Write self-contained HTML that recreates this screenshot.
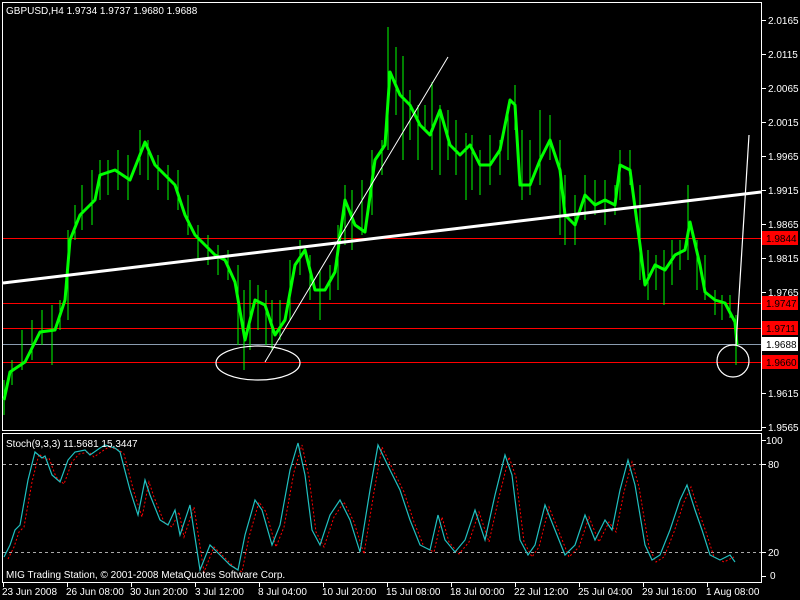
<!DOCTYPE html>
<html><head><meta charset="utf-8"><style>
html,body{margin:0;padding:0;background:#000;width:800px;height:600px;overflow:hidden}
svg{display:block}
text{font-family:"Liberation Sans",sans-serif;font-size:10px;fill:#fff}
</style></head><body>
<svg width="800" height="600" xmlns="http://www.w3.org/2000/svg">
<rect width="800" height="600" fill="#000"/>
<rect x="2.5" y="2.5" width="759" height="428" fill="none" stroke="#fff"/>
<rect x="2.5" y="433.5" width="759" height="149" fill="none" stroke="#fff"/>
<line x1="3" y1="238.5" x2="761" y2="238.5" stroke="#f00"/>
<line x1="3" y1="303.5" x2="761" y2="303.5" stroke="#f00"/>
<line x1="3" y1="328.5" x2="761" y2="328.5" stroke="#f00"/>
<line x1="3" y1="344.5" x2="761" y2="344.5" stroke="#8a9cb0"/>
<line x1="3" y1="362.5" x2="761" y2="362.5" stroke="#f00"/>
<g stroke="#0f0" stroke-width="1">
<path d="M4 380V415M12 360V385M22 330V370M32 320V360M42 310V345M52 305V365M60 300V330M68 230V320M75 205V240M82 185V230M92 170V225M100 160V200M108 160V195M118 150V190M128 155V200M140 130V175M148 140V180M158 155V190M168 165V200M178 170V210M188 195V235M198 225V260M208 235V265M218 245V275M228 250V280M238 265V345M244 290V370M250 280V350M258 285V330M266 290V345M272 300V350M280 300V340M290 260V320M300 240V275M310 255V300M320 270V320M330 265V300M338 225V290M345 185V245M352 190V250M362 180V235M372 150V215M382 140V175M388 27V150M396 47V115M403 56V160M410 90V140M418 105V160M425 105V130M432 82V170M440 105V175M448 110V160M456 120V175M466 133V200M472 135V190M480 150V195M490 135V185M500 140V175M508 110V160M515 85V130M522 130V200M530 140V195M540 110V185M550 115V160M560 140V235M565 175V245M575 195V245M585 175V220M595 180V215M605 180V225M615 185V215M620 150V200M630 150V185M640 185V280M648 250V300M656 255V290M664 250V305M672 240V285M680 240V270M688 185V260M697 240V290M705 255V300M715 290V315M722 295V320M730 295V318M736 315V365"/>
</g>
<polyline fill="none" stroke="#0f0" stroke-width="3" stroke-linejoin="round" points="4,400 10,372 25,362 40,332 55,330 65,300 70,240 80,215 95,200 100,175 115,170 130,180 145,142 155,165 165,175 175,185 185,215 195,235 205,245 215,255 225,260 235,282 245,340 255,300 265,305 275,335 285,320 295,265 305,250 315,290 325,290 335,272 345,200 355,225 365,232 375,160 385,145 390,72 400,95 410,105 420,125 430,135 440,110 450,145 460,155 470,145 480,165 490,165 500,150 510,100 515,105 520,185 530,185 540,160 550,140 560,170 565,215 575,225 585,195 595,205 605,200 615,205 620,165 630,170 640,245 645,285 655,265 665,270 675,255 685,250 690,222 700,265 705,292 715,300 725,303 735,322 737,345"/>
<line x1="3" y1="283" x2="761" y2="192" stroke="#fff" stroke-width="3"/>
<line x1="265" y1="362" x2="448" y2="57" stroke="#fff" stroke-width="1"/>
<line x1="736" y1="345" x2="749" y2="135" stroke="#fff" stroke-width="1.2"/>
<ellipse cx="258" cy="363" rx="42" ry="17" fill="none" stroke="#fff" stroke-width="1.2"/>
<circle cx="733" cy="361" r="16" fill="none" stroke="#fff" stroke-width="1.2"/>
<text x="6" y="14">GBPUSD,H4  1.9734 1.9737 1.9680 1.9688</text>
<g stroke="#fff"><path d="M762 20.5h4M762 54.5h4M762 88.5h4M762 122.5h4M762 156.5h4M762 190.5h4M762 224.5h4M762 258.5h4M762 292.5h4M762 393.5h4M762 427.5h4"/></g>
<g>
<text x="768" y="24">2.0165</text><text x="768" y="58">2.0115</text><text x="768" y="92">2.0065</text>
<text x="768" y="126">2.0015</text><text x="768" y="160">1.9965</text><text x="768" y="194">1.9915</text>
<text x="768" y="228">1.9865</text><text x="768" y="262">1.9815</text><text x="768" y="296">1.9765</text>
<text x="768" y="397">1.9615</text><text x="768" y="431">1.9565</text>
</g>
<rect x="762" y="231" width="36" height="14" fill="#f00"/><text x="766" y="242" style="fill:#000">1.9844</text>
<rect x="762" y="296" width="36" height="14" fill="#f00"/><text x="766" y="307" style="fill:#000">1.9747</text>
<rect x="762" y="321" width="36" height="14" fill="#f00"/><text x="766" y="332" style="fill:#000">1.9711</text>
<rect x="762" y="337" width="36" height="14" fill="#fff"/><text x="766" y="348" style="fill:#000">1.9688</text>
<rect x="762" y="355" width="36" height="14" fill="#f00"/><text x="766" y="366" style="fill:#000">1.9660</text>
<line x1="3" y1="464.5" x2="761" y2="464.5" stroke="#aaa" stroke-dasharray="3,3"/>
<line x1="3" y1="552.5" x2="761" y2="552.5" stroke="#aaa" stroke-dasharray="3,3"/>
<polyline fill="none" stroke="#f00" stroke-width="1" stroke-dasharray="2,2" transform="translate(4,2)" points="4,557 10,545 15,530 20,525 28,480 35,452 42,458 45,456 52,475 60,482 68,460 75,452 85,450 90,455 100,448 105,445 115,448 120,452 130,490 138,515 145,480 150,495 160,520 168,525 175,510 180,535 190,505 200,570 210,545 220,555 230,565 238,570 245,535 255,500 262,510 272,545 280,525 290,470 298,443 305,475 312,530 320,545 330,515 340,500 350,520 360,552 370,490 378,445 390,470 400,490 410,520 420,545 430,550 438,515 445,540 455,552 465,540 475,510 485,540 495,495 505,455 512,475 520,540 528,555 535,545 545,505 555,530 565,555 575,545 585,515 595,540 605,520 612,530 620,490 628,460 635,485 645,545 652,560 660,555 670,530 680,500 687,485 695,510 702,530 710,555 720,560 730,555"/>
<polyline fill="none" stroke="#20c0c0" stroke-width="1.2" points="4,557 10,545 15,530 20,525 28,480 35,452 42,458 45,456 52,475 60,482 68,460 75,452 85,450 90,455 100,448 105,445 115,448 120,452 130,490 138,515 145,480 150,495 160,520 168,525 175,510 180,535 190,505 200,570 210,545 220,555 230,565 238,570 245,535 255,500 262,510 272,545 280,525 290,470 298,443 305,475 312,530 320,545 330,515 340,500 350,520 360,552 370,490 378,445 390,470 400,490 410,520 420,545 430,550 438,515 445,540 455,552 465,540 475,510 485,540 495,495 505,455 512,475 520,540 528,555 535,545 545,505 555,530 565,555 575,545 585,515 595,540 605,520 612,530 620,490 628,460 635,485 645,545 652,560 660,555 670,530 680,500 687,485 695,510 702,530 710,555 720,560 730,555 735,562"/>
<text x="6" y="447">Stoch(9,3,3) 11.5681 15.3447</text>
<text x="6" y="578">MIG Trading Station, © 2001-2008 MetaQuotes Software Corp.</text>
<g stroke="#fff"><path d="M762 440.5h4M762 464.5h4M762 552.5h4M762 576.5h4"/></g>
<text x="766" y="444">100</text><text x="768" y="468">80</text><text x="768" y="556">20</text><text x="770" y="579">0</text>
<g stroke="#fff"><path d="M3.5 583v4M67.5 583v4M131.5 583v4M195.5 583v4M259.5 583v4M323.5 583v4M387.5 583v4M451.5 583v4M515.5 583v4M579.5 583v4M643.5 583v4M707.5 583v4"/></g>
<text x="2" y="595">23 Jun 2008</text><text x="66" y="595">26 Jun 08:00</text><text x="130" y="595">30 Jun 20:00</text>
<text x="195" y="595">3 Jul 12:00</text><text x="258" y="595">8 Jul 04:00</text><text x="322" y="595">10 Jul 20:00</text>
<text x="386" y="595">15 Jul 08:00</text><text x="450" y="595">18 Jul 00:00</text><text x="514" y="595">22 Jul 12:00</text>
<text x="578" y="595">25 Jul 04:00</text><text x="642" y="595">29 Jul 16:00</text><text x="706" y="595">1 Aug 08:00</text>
</svg>
</body></html>
